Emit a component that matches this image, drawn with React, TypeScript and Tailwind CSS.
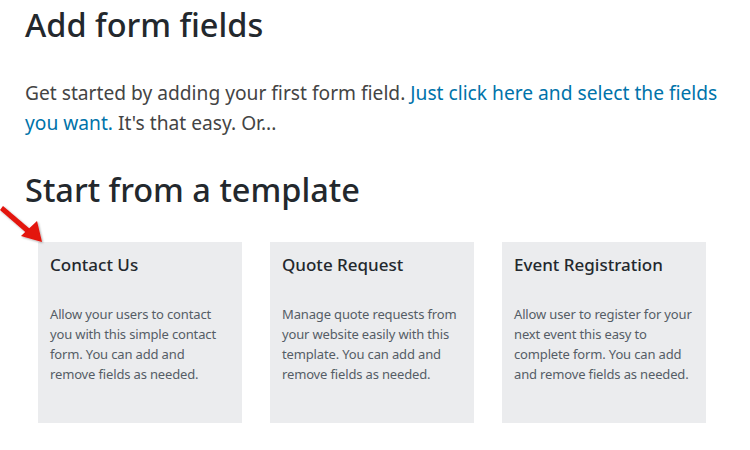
import React from 'react';

const templates = [
  {
    title: 'Contact Us',
    text: 'Allow your users to contact you with this simple contact form. You can add and remove fields as needed.',
  },
  {
    title: 'Quote Request',
    text: 'Manage quote requests from your website easily with this template. You can add and remove fields as needed.',
  },
  {
    title: 'Event Registration',
    text: 'Allow user to register for your next event this easy to complete form. You can add and remove fields as needed.',
  },
];

function Arrow() {
  return (
    <svg className="absolute left-0 top-[204px]" width="48" height="44" viewBox="0 0 48 44">
      <defs>
        <filter id="sh" x="-20%" y="-20%" width="140%" height="140%">
          <feDropShadow dx="1" dy="1" stdDeviation="1" floodColor="#000" floodOpacity="0.35" />
        </filter>
      </defs>
      <g filter="url(#sh)" fill="#e3120b">
        <path d="M3 2 L30 25 L26.5 29 L0 6 Z" />
        <path d="M21 32 L37 17 L42 38 Z" />
      </g>
    </svg>
  );
}

export default function App() {
  return (
    <div className="relative w-[750px] h-[450px] bg-white pl-[25px] pt-[3px] font-['Noto_Sans',sans-serif] overflow-hidden">
      <h1 className="text-[32.5px] leading-[44px] text-[#23282d] font-medium">Add form fields</h1>
      <p className="mt-[31px] w-[705px] text-[19.2px] leading-[30px] text-[#444]">
        Get started by adding your first form field.{' '}
        <a className="text-[#0073aa]">Just click here and select the fields you want.</a> It's that easy. Or...
      </p>
      <h2 className="mt-[30px] text-[32.5px] leading-[44px] text-[#23282d] font-medium">Start from a template</h2>
      <Arrow />
      <div className="mt-[30px] ml-[13px] flex gap-[28px]">
        {templates.map((t) => (
          <div key={t.title} className="w-[204px] h-[181px] bg-[#ebecee] px-3 pt-[11px]">
            <h3 className="text-[17px] leading-6 text-[#23282d] font-medium">{t.title}</h3>
            <p className="mt-[27px] text-[13px] leading-5 tracking-[-0.15px] text-[#555d66]">{t.text}</p>
          </div>
        ))}
      </div>
    </div>
  );
}
